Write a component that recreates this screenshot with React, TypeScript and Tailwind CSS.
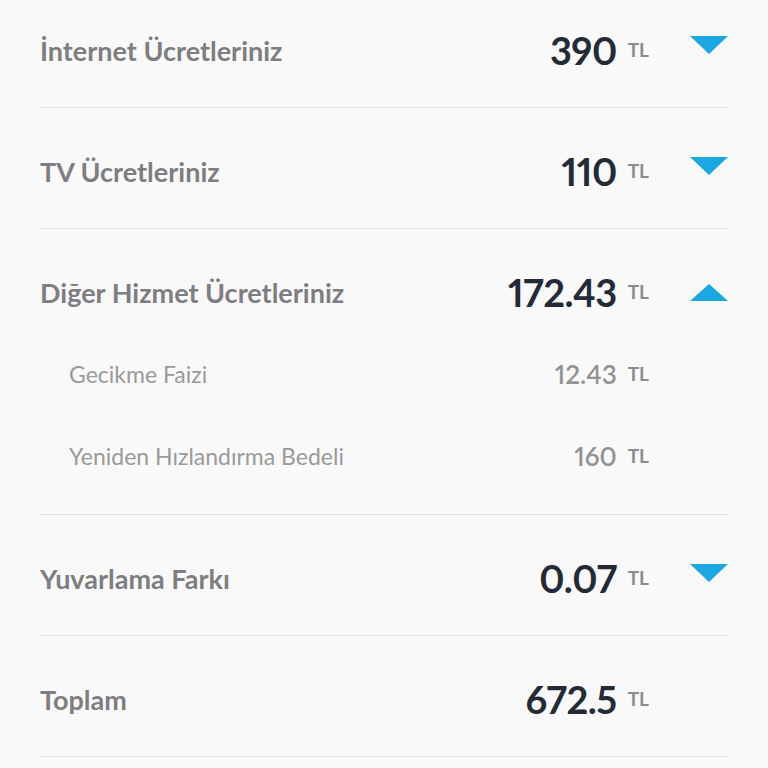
import React from "react";

type Sub = { label: string; amount: string };
type Row = { label: string; amount: string; arrow?: "up" | "down"; subs?: Sub[] };

const rows: Row[] = [
  { label: "İnternet Ücretleriniz", amount: "390", arrow: "down" },
  { label: "TV Ücretleriniz", amount: "110", arrow: "down" },
  {
    label: "Diğer Hizmet Ücretleriniz",
    amount: "172.43",
    arrow: "up",
    subs: [
      { label: "Gecikme Faizi", amount: "12.43" },
      { label: "Yeniden Hızlandırma Bedeli", amount: "160" },
    ],
  },
  { label: "Yuvarlama Farkı", amount: "0.07", arrow: "down" },
  { label: "Toplam", amount: "672.5" },
];

function Arrow({ dir }: { dir?: "up" | "down" }) {
  if (!dir) return <div className="w-[38px] ml-[41px]" />;
  if (dir === "down")
    return (
      <div className="w-[38px] ml-[41px] mb-[10px]">
        <svg width="38" height="18" viewBox="0 0 38 18">
          <path d="M0 0 H38 L19 18 Z" fill="#1aa7e2" />
        </svg>
      </div>
    );
  return (
    <div className="w-[38px] ml-[41px]">
      <svg width="38" height="17" viewBox="0 0 38 17">
        <path d="M0 17 H38 L19 0 Z" fill="#1aa7e2" />
      </svg>
    </div>
  );
}

function Amount({ value }: { value: string }) {
  return (
    <div className="flex items-start">
      <span className="text-[38px] leading-none font-bold text-[#232b36] proportional-nums tracking-[-0.5px]">
        {value}
      </span>
      <span className="ml-[11px] mt-[9px] text-[19px] leading-none font-bold text-[#8c8c8c]">TL</span>
    </div>
  );
}

function SubAmount({ value }: { value: string }) {
  return (
    <div className="flex items-start">
      <span className="text-[26px] leading-none font-semibold text-[#939393] proportional-nums">{value}</span>
      <span className="ml-[11px] mt-[3px] text-[19px] leading-none font-bold text-[#8c8c8c]">TL</span>
    </div>
  );
}

export default function App() {
  return (
    <div
      className="min-h-screen bg-[#f9f9f9] px-[40px] overflow-hidden"
      style={{ fontFamily: "Lato, 'Noto Sans', sans-serif" }}
    >
      <div className="mt-[-13px]">
        {rows.map((row) => (
          <div key={row.label} className="border-b border-[#e2e2e2]">
            <div
              className={
                row.subs
                  ? "flex items-center h-[104px] pt-[22px]"
                  : "flex items-center h-[120px] pt-[6px]"
              }
            >
              <div className="flex-1 text-[27px] leading-none font-bold text-[#7e7e81]">
                {row.label}
              </div>
              <Amount value={row.amount} />
              <Arrow dir={row.arrow} />
            </div>

            {row.subs && (
              <div className="pb-[17px]">
                {row.subs.map((s) => (
                  <div key={s.label} className="flex items-center h-[82px]">
                    <div className="flex-1 pl-[29px] text-[23px] leading-none text-[#9a9a9a]">
                      {s.label}
                    </div>
                    <SubAmount value={s.amount} />
                    <div className="w-[38px] ml-[41px]" />
                  </div>
                ))}
              </div>
            )}
          </div>
        ))}
      </div>
    </div>
  );
}
